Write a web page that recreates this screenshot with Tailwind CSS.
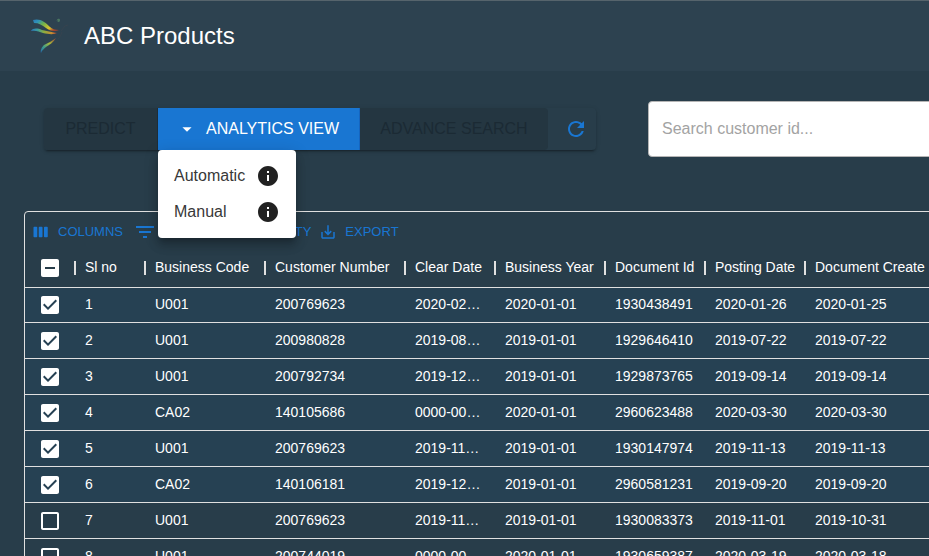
<!DOCTYPE html>
<html lang="en">
<head>
<meta charset="utf-8">
<title>ABC Products</title>
<script src="https://cdn.jsdelivr.net/npm/@tailwindcss/browser@4"></script>
</head>
<body class="h-screen overflow-hidden bg-[#283d4a] font-['Liberation_Sans',Arial,sans-serif] text-white">
<svg class="hidden" aria-hidden="true">
  <symbol id="on" viewBox="0 0 24 24"><path d="M19 3H5c-1.11 0-2 .9-2 2v14c0 1.1.89 2 2 2h14c1.11 0 2-.9 2-2V5c0-1.1-.89-2-2-2zm-9 14l-5-5 1.41-1.41L10 14.17l7.59-7.59L19 8l-9 9z"/></symbol>
  <symbol id="off" viewBox="0 0 24 24"><path d="M19 5v14H5V5h14m0-2H5c-1.1 0-2 .9-2 2v14c0 1.1.9 2 2 2h14c1.1 0 2-.9 2-2V5c0-1.1-.9-2-2-2z"/></symbol>
  <symbol id="some" viewBox="0 0 24 24"><path d="M19 3H5c-1.1 0-2 .9-2 2v14c0 1.1.9 2 2 2h14c1.1 0 2-.9 2-2V5c0-1.1-.9-2-2-2zm-2 10H7v-2h10v2z"/></symbol>
  <symbol id="info" viewBox="0 0 24 24"><path d="M12 2C6.48 2 2 6.48 2 12s4.48 10 10 10 10-4.48 10-10S17.52 2 12 2zm1 15h-2v-6h2v6zm0-8h-2V7h2v2z"/></symbol>
</svg>

<header class="flex h-[71px] items-center gap-4 border-t border-[#56646c] bg-[#2d4250] pl-7">
  <svg class="size-10" viewBox="0 0 40 40" aria-hidden="true">
    <defs>
      <linearGradient id="w1" x1="0" x2="1" y1="0" y2=".5"><stop offset="0" stop-color="#2b78b4"/><stop offset=".22" stop-color="#2f93b8"/><stop offset=".45" stop-color="#6cb04e"/><stop offset=".8" stop-color="#dcc52a"/><stop offset="1" stop-color="#a5432f"/></linearGradient>
      <linearGradient id="w2" x1="0" x2="1" y1="0" y2="0"><stop offset="0" stop-color="#2b78c0"/><stop offset=".25" stop-color="#3a9c9c"/><stop offset=".5" stop-color="#8fae3c"/><stop offset=".8" stop-color="#c98a30"/><stop offset="1" stop-color="#a03a38"/></linearGradient>
      <linearGradient id="w3" x1="0" x2="1" y1="1" y2="0"><stop offset="0" stop-color="#2467b0"/><stop offset=".3" stop-color="#3d9d8a"/><stop offset=".6" stop-color="#a6b83a"/><stop offset="1" stop-color="#94403a"/></linearGradient>
    </defs>
    <path d="M5 4C12 2 17 6 22 11c2 2 5 3 9 3-5 2-9 1-13-2C14 9 11 7 6 7z" fill="url(#w1)"/>
    <path d="M3 15c2-3 6-3 11-1 5 1 9 2 15 3-4 2-9 1-14 0-4-1-7-3-12-2z" fill="url(#w2)"/>
    <path d="M28 22c-3 5-7 7-10 9-2 2-4 3-5 6-1-3 1-6 3-8 4-2 8-4 12-7z" fill="url(#w3)"/>
    <path d="M29 4c1-2 3-1 3 0 0 2-1 2-3 2 2-1 1-2-1-1z" fill="#4a7660"/>
    <path d="M33 15l4-5 3-1M34 16c-1 3-2 5-4 7" fill="none" stroke="#36434f"/>
  </svg>
  <h1 class="text-2xl">ABC Products</h1>
</header>

<main>
  <section class="flex items-start pt-[30px] pl-11">
    <div class="relative mt-[7px] mr-[52px] flex h-[42px] shrink-0 rounded shadow-[0_3px_1px_-2px_rgba(0,0,0,.2),0_2px_2px_rgba(0,0,0,.14),0_1px_5px_rgba(0,0,0,.12)]">
      <button disabled class="w-[114px] rounded-l border-r border-[#1d2d37] bg-[#243641] text-base text-[#1b2a34]">PREDICT</button>
      <button class="flex w-[202px] items-center border-r border-[#1565c0] bg-[#1976d2] pl-[18px] text-base whitespace-nowrap text-white" aria-haspopup="menu" aria-expanded="true">
        <svg class="mr-2 size-[22px] fill-current" viewBox="0 0 24 24" aria-hidden="true"><path d="M7 10l5 5 5-5z"/></svg>ANALYTICS VIEW
      </button>
      <button disabled class="w-[188px] rounded-r bg-[#243641] text-base text-[#1b2a34]">ADVANCE SEARCH</button>
      <button class="flex w-12 items-center pl-4 text-[#1976d2]" aria-label="Refresh">
        <svg class="size-6 fill-current" viewBox="0 0 24 24" aria-hidden="true"><path d="M17.65 6.35C16.2 4.9 14.21 4 12 4c-4.42 0-7.99 3.58-7.99 8s3.57 8 7.99 8c3.73 0 6.84-2.55 7.73-6h-2.08c-.82 2.33-3.04 4-5.65 4-3.31 0-6-2.69-6-6s2.69-6 6-6c1.66 0 3.14.69 4.22 1.78L13 11h7V4l-2.35 2.35z"/></svg>
      </button>
      <ul role="menu" class="absolute top-full left-[114px] z-10 w-[138px] rounded bg-white py-2 text-base text-[#383838] shadow-[0_5px_5px_-3px_rgba(0,0,0,.2),0_8px_10px_1px_rgba(0,0,0,.14),0_3px_14px_2px_rgba(0,0,0,.12)]">
        <li role="none"><button role="menuitem" class="flex h-9 w-full items-center justify-between px-4">Automatic<svg class="size-6 fill-[#212121]" aria-hidden="true"><use href="#info"/></svg></button></li>
        <li role="none"><button role="menuitem" class="flex h-9 w-full items-center justify-between px-4">Manual<svg class="size-6 fill-[#212121]" aria-hidden="true"><use href="#info"/></svg></button></li>
      </ul>
    </div>
    <input type="text" aria-label="Search customer id" placeholder="Search customer id..." class="h-14 w-[400px] shrink-0 rounded border border-[#b5b5b5] bg-white px-[13px] text-base text-[#212121] placeholder:text-[#a3a3a3]">
  </section>

  <section class="mt-[54px] ml-6 w-max rounded border border-[#e0e0e0]">
    <div class="flex h-9 items-center gap-2 px-[7px] pt-1 text-[13px] text-[#1976d2]">
      <button class="flex items-center gap-2"><svg class="size-[18px] fill-current" viewBox="0 0 24 24" aria-hidden="true"><path d="M6 5H3c-.55 0-1 .45-1 1v12c0 .55.45 1 1 1h3c.55 0 1-.45 1-1V6c0-.55-.45-1-1-1zm14 0h-3c-.55 0-1 .45-1 1v12c0 .55.45 1 1 1h3c.55 0 1-.45 1-1V6c0-.55-.45-1-1-1zm-7 0h-3c-.55 0-1 .45-1 1v12c0 .55.45 1 1 1h3c.55 0 1-.45 1-1V6c0-.55-.45-1-1-1z"/></svg>COLUMNS</button>
      <button class="ml-0.5 flex w-[88px] items-center gap-2"><svg class="size-6 fill-current" viewBox="0 0 24 24" aria-hidden="true"><path d="M10 18h4v-2h-4v2zM3 6v2h18V6H3zm3 7h12v-2H6v2z"/></svg>FILTERS</button>
      <button class="flex items-center gap-2"><svg class="size-[18px] fill-current" viewBox="0 0 24 24" aria-hidden="true"><path d="M21 8H3V4h18v4zm0 2H3v4h18v-4zm0 6H3v4h18v-4z"/></svg>DENSITY</button>
      <button class="flex items-center gap-2"><svg class="size-[18px] fill-current" viewBox="0 0 24 24" aria-hidden="true"><path d="M19 12v7H5v-7H3v7c0 1.1.9 2 2 2h14c1.1 0 2-.9 2-2v-7h-2zm-6 .67l2.59-2.58L17 11.5l-5 5-5-5 1.41-1.41L11 12.67V3h2v9.67z"/></svg>EXPORT</button>
    </div>
    <table class="w-[980px] table-fixed border-separate border-spacing-0 text-sm">
      <colgroup><col class="w-[49px]"><col class="w-[70px]"><col class="w-[120px]"><col class="w-[140px]"><col class="w-[90px]"><col class="w-[110px]"><col class="w-[100px]"><col class="w-[100px]"><col></colgroup>
      <thead><tr id="head" class="h-10"></tr></thead>
      <tbody id="rows"></tbody>
    </table>
  </section>
</main>

<script>
const heads = ['Sl no', 'Business Code', 'Customer Number', 'Clear Date', 'Business Year', 'Document Id', 'Posting Date', 'Document Create Date'];
const data = [
  ['U001', '200769623', '2020-02-10', '2020-01-01', '1930438491', '2020-01-26', '2020-01-25'],
  ['U001', '200980828', '2019-08-08', '2019-01-01', '1929646410', '2019-07-22', '2019-07-22'],
  ['U001', '200792734', '2019-12-30', '2019-01-01', '1929873765', '2019-09-14', '2019-09-14'],
  ['CA02', '140105686', '0000-00-00', '2020-01-01', '2960623488', '2020-03-30', '2020-03-30'],
  ['U001', '200769623', '2019-11-25', '2019-01-01', '1930147974', '2019-11-13', '2019-11-13'],
  ['CA02', '140106181', '2019-12-04', '2019-01-01', '2960581231', '2019-09-20', '2019-09-20'],
  ['U001', '200769623', '2019-11-12', '2019-01-01', '1930083373', '2019-11-01', '2019-10-31'],
  ['U001', '200744019', '0000-00-00', '2020-01-01', '1930659387', '2020-03-19', '2020-03-18']
];
const box = (icon, label, checked) => `<label class="grid w-[50px] place-items-center"><input type="checkbox" aria-label="${label}" ${checked ? 'checked' : ''} class="col-start-1 row-start-1 size-[18px] appearance-none"><svg class="pointer-events-none col-start-1 row-start-1 size-6 fill-white" aria-hidden="true"><use href="#${icon}"/></svg></label>`;
document.getElementById('head').innerHTML =
  `<th class="border-b border-[#e0e0e0] p-0">${box('some', 'Select all rows', false)}</th>` +
  heads.map(h => `<th class="border-b border-[#e0e0e0] p-0 font-normal"><div class="flex items-center gap-[9px] whitespace-nowrap"><span class="h-3.5 w-0.5 shrink-0 bg-[#e0e0e0]"></span><span class="pb-0.5">${h}</span></div></th>`).join('');
document.getElementById('rows').innerHTML = data.map((r, i) => {
  const sel = i < 6;
  return `<tr class="h-9 first:h-[35px] ${sel ? 'bg-[#264153]' : ''}"><td class="border-b border-[#e0e0e0] p-0">${box(sel ? 'on' : 'off', 'Select row ' + (i + 1), sel)}</td>` +
    [i + 1, ...r].map(c => `<td class="truncate border-b border-[#e0e0e0] pt-0 pr-[11px] pb-0.5 pl-[11px]">${c}</td>`).join('') + '</tr>';
}).join('');
document.querySelector('#head input').indeterminate = true;
</script>
</body>
</html>
